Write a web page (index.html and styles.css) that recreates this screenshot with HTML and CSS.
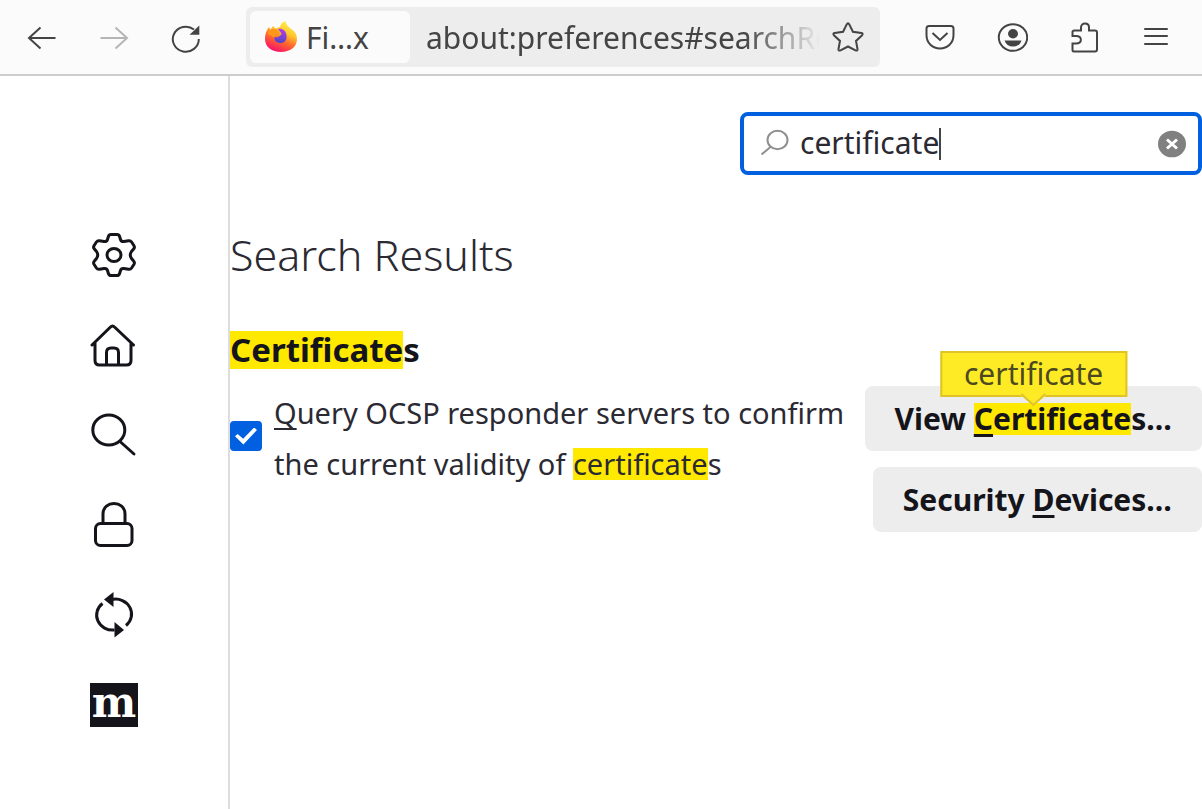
FILE: index.html
```html
<!DOCTYPE html>
<html lang="en">
<head>
<meta charset="utf-8">
<title>Settings</title>
<link rel="stylesheet" href="styles.css">
</head>
<body>
<header class="toolbar">
  <div class="toolbar-group">
    <button class="tool" type="button" aria-label="Back">
      <svg width="32" height="32" viewBox="0 0 32 32"><path d="M29.500 17H3M14.500 6.500L3 17l11.500 10.500"/></svg>
    </button>
    <button class="tool tool-disabled" type="button" aria-label="Forward" disabled>
      <svg width="32" height="32" viewBox="0 0 32 32"><path d="M2.500 17H29M17.500 6.500L29 17 17.500 27.500"/></svg>
    </button>
    <button class="tool" type="button" aria-label="Reload">
      <svg width="32" height="32" viewBox="0 0 32 32"><path d="M24 8.500A13 12.500 0 1 0 28.800 18"/><path class="solid" d="M29.300 4.500v9.300H19.500z"/></svg>
    </button>
  </div>
  <div class="urlbar">
    <button class="identity" type="button">
      <svg width="34" height="34" viewBox="0 0 34 34" aria-hidden="true">
        <defs>
          <linearGradient id="flame" x1="0.800" y1="0.050" x2="0.350" y2="1">
            <stop offset="0" stop-color="#fff44f"/><stop offset="0.350" stop-color="#ffc52e"/>
            <stop offset="0.620" stop-color="#ff6a2a"/><stop offset="1" stop-color="#f8106c"/>
          </linearGradient>
          <linearGradient id="globe" x1="0.600" y1="0" x2="0.400" y2="1">
            <stop offset="0" stop-color="#b83ce0"/><stop offset="1" stop-color="#4b46c8"/>
          </linearGradient>
        </defs>
        <path fill="url(#flame)" d="M1 19C1 14 2.500 10 5 7l1.500 2.500L9 6l2.500 2.500L16 7c.5-3 2.500-5 5.500-6 .5 4 3 6 6.500 8.500 3.500 2.500 5 5.500 5 9.500 0 8-7 13-16 13S1 27 1 19z"/>
        <path fill="url(#globe)" d="M14 9c4-1 8 1 8.500 6.500.5 5-2 7.500-6 7.500s-6.500-2.500-6-6c1.500.8 3.500.5 5-1 1-1 2-1 2-2-.5-2-2-2.500-3.500-5z"/>
        <path fill="#ff961c" d="M3.500 14c2-4.500 6-6 9.500-4.500l3 3.500c-2 1.500-4.500 1.500-6 4.500-2-1.500-4-2.500-6.500-3.500z"/>
      </svg>
      <span>Fi…x</span>
    </button>
    <div class="address">about:preferences#searchRes</div>
    <button class="star" type="button" aria-label="Bookmark this page">
      <svg width="34" height="34" viewBox="0 0 34 34"><path d="M16.700 4.400q1.300-2.400 2.600 0l3.600 7.400 8.500 1.200q2.100.5.700 2.200l-6.100 5.700 1.500 8.100q.2 2.200-2 1.400L18 26.500l-7.500 3.900q-2.200.8-2-1.400L10 20.900l-6.100-5.700q-1.400-1.700.7-2.200l8.500-1.200z"/></svg>
    </button>
  </div>
  <div class="toolbar-group">
    <button class="tool" type="button" aria-label="Save to Pocket">
      <svg width="32" height="32" viewBox="0 0 32 32"><path d="M5 5h22q2.500 0 2.500 2.500V14c0 8-6 13.500-13.500 13.500S2.500 22 2.500 14V7.500Q2.500 5 5 5z"/><path d="M8.500 12l7.500 7 7.500-7"/></svg>
    </button>
    <button class="tool" type="button" aria-label="Account">
      <svg width="32" height="32" viewBox="0 0 32 32"><ellipse cx="17" cy="16.500" rx="14.200" ry="13.300"/><ellipse class="solid" cx="17" cy="12.800" rx="5" ry="4.700"/><path class="solid" d="M8.500 19.500h17q-2 6-8.500 6t-8.500-6z"/></svg>
    </button>
    <button class="tool" type="button" aria-label="Extensions">
      <svg width="32" height="32" viewBox="0 0 32 32"><path d="M6.500 9.500H13V6.500c0-5.300 8-5.300 8 0v3h6q2 0 2 2v17q0 2-2 2h-21q-1.500 0-1.500-1.500v-6.500h3.500c6.500 0 6.500-7.500 0-7.500H4.500V11q0-1.500 2-1.500z"/></svg>
    </button>
    <button class="tool" type="button" aria-label="Open application menu">
      <svg width="32" height="32" viewBox="0 0 32 32"><path stroke-linecap="round" d="M5 8h22M5 15h22M5 23h22"/></svg>
    </button>
  </div>
</header>
<div class="page">
  <nav class="sidebar" aria-label="Settings categories">
    <a href="#general" aria-label="General">
      <svg width="48" height="48" viewBox="-24 -24 48 48">
        <defs><path id="gear-half" d="M0-20.500H3Q5-20.500 5.600-18.500L6.500-15.500Q7.300-13 10-13.500L14.500-14.300Q16.500-14.600 17.600-13L20-9.300Q21-7.500 19.600-6L17.500-3.500Q15 0 17.500 3.500L19.600 6Q21 7.500 20 9.300L17.600 13Q16.500 14.600 14.500 14.300L10 13.500Q7.300 13 6.500 15.500L5.600 18.500Q5 20.500 3 20.500H0"/></defs>
        <use href="#gear-half"/><use href="#gear-half" transform="scale(-1 1)"/><ellipse rx="7" ry="6.500"/>
      </svg>
    </a>
    <a href="#home" aria-label="Home">
      <svg width="48" height="48" viewBox="0 0 48 48"><path stroke-linecap="round" d="M2 24L20.500 6Q22.500 4 24.500 6L43.500 24M5 22v17.500Q5 44 9.500 44h27q4.500 0 4.500-4.500V22M16.500 44V31.500q0-4.500 4.500-4.500h3q4.500 0 4.500 4.500v12.500"/></svg>
    </a>
    <a href="#search" aria-label="Search">
      <svg width="48" height="48" viewBox="0 0 48 48"><ellipse cx="18.800" cy="19" rx="16" ry="15"/><path stroke-linecap="round" d="M30 30.500l14 12.500"/></svg>
    </a>
    <a href="#privacy" aria-label="Privacy &amp; Security">
      <svg width="48" height="48" viewBox="0 0 48 48"><rect x="5.500" y="22.500" width="36.500" height="22" rx="5"/><path d="M13 22V13c0-14 22-14 22 0v9"/></svg>
    </a>
    <a href="#sync" aria-label="Sync">
      <svg width="48" height="48" viewBox="0 0 48 48"><path d="M12.500 12.500A16 15 0 0 0 24.500 39M22 8.500A16 15 0 0 1 36 34.500"/><path class="solid" d="M23.500 1v15L14 8.500zM24.500 31v15.500L34 39z"/></svg>
    </a>
    <a href="#mozilla" aria-label="More from Mozilla"><span class="mozilla">m</span></a>
  </nav>
  <main class="content">
    <div class="search">
      <svg width="30" height="30" viewBox="0 0 30 30" aria-hidden="true"><ellipse cx="17.500" cy="11" rx="10" ry="9.300"/><path d="M10.500 18l-9 7.500"/></svg>
      <input class="search-input" type="text" value="certificate" aria-label="Find in Settings">
      <span class="caret"></span>
      <button class="clear" type="button" aria-label="Clear">
        <svg width="28" height="28" viewBox="0 0 28 28"><ellipse cx="14" cy="14" rx="14" ry="13.300"/><path d="M9 9.500l10 9M19 9.500l-10 9"/></svg>
      </button>
    </div>
    <h1 class="title">Search Results</h1>
    <h2 class="subtitle"><mark>Certificate</mark>s</h2>
    <div class="row">
      <div class="option">
        <input class="check" type="checkbox" id="ocsp" checked>
        <label for="ocsp"><u>Q</u>uery OCSP responder servers to confirm the current validity of <mark>certificate</mark>s</label>
      </div>
      <div class="actions">
        <button class="action" type="button">View <mark class="hit"><u>C</u>ertificate<span class="tip">certificate<svg width="26" height="12" viewBox="0 0 26 12" aria-hidden="true"><path class="tip-fill" d="M0-2h26V0L13 11 0 0z"/><path class="tip-edge" d="M1-1l12 11L25-1"/></svg></span></mark>s…</button>
        <button class="action" type="button">Security <u>D</u>evices…</button>
      </div>
    </div>
  </main>
</div>
</body>
</html>
```
FILE: styles.css
```css
* { box-sizing: border-box; }
body {
  margin: 0;
  min-height: 100vh;
  display: flex;
  flex-direction: column;
  background: #fff;
  color: #15141a;
  font-family: "Noto Sans", "Open Sans", sans-serif;
  font-size: 30px;
}
button { border: 0; background: none; padding: 0; font: inherit; color: inherit; }
svg { display: block; fill: none; stroke: currentColor; stroke-width: 2; flex: none; }
svg .solid { fill: currentColor; stroke: none; }
mark { background: #ffe900; color: inherit; }
u { text-decoration-thickness: 2px; text-underline-offset: 4px; text-decoration-skip-ink: none; }

.toolbar {
  display: flex;
  align-items: center;
  gap: 24px;
  height: 76px;
  padding: 0 10px 0 6px;
  background: #fbfbfb;
  border-bottom: 2px solid #ccc;
  color: #444;
}
.toolbar-group { display: flex; }
.tool { width: 72px; height: 60px; display: flex; align-items: center; justify-content: center; }
.tool-disabled { color: #b5b5b5; }
.urlbar {
  flex: 1;
  min-width: 0;
  display: flex;
  align-items: center;
  height: 60px;
  padding: 4px;
  background: #ededed;
  border-radius: 6px;
}
.identity {
  display: flex;
  align-items: center;
  gap: 8px;
  width: 160px;
  height: 52px;
  padding-left: 14px;
  background: #fbfbfb;
  border-radius: 6px;
}
.identity svg { stroke: none; }
.address {
  flex: 1;
  min-width: 0;
  margin: 0 10px 0 16px;
  overflow: hidden;
  white-space: nowrap;
  -webkit-mask-image: linear-gradient(to left, transparent, #000 76px);
  mask-image: linear-gradient(to left, transparent, #000 76px);
}
.star { margin-right: 12px; }

.page { flex: 1; display: flex; }
.sidebar {
  width: 230px;
  padding-top: 134px;
  border-right: 2px solid #ddd;
  display: flex;
  flex-direction: column;
}
.sidebar a {
  height: 90px;
  display: flex;
  align-items: center;
  justify-content: center;
  color: #15141a;
  text-decoration: none;
}
.sidebar svg { stroke-width: 3; }
.mozilla {
  width: 48px;
  height: 44px;
  background: #15141a;
  color: #fff;
  font: bold 42px/40px "DejaVu Serif", serif;
  text-align: center;
}

.content { flex: 1; min-width: 0; display: flex; flex-direction: column; padding-top: 36px; }
.search {
  align-self: flex-end;
  width: 462px;
  height: 63px;
  display: flex;
  align-items: center;
  padding: 0 12px 0 16px;
  border: 4px solid #0060df;
  border-radius: 8px;
}
.search > svg { color: #8f8f8f; }
.search-input {
  field-sizing: content;
  height: 44px;
  margin-left: 10px;
  padding: 0 0 2px;
  border: 0;
  outline: 0;
  font: inherit;
  color: #2b2a33;
}
.caret { width: 2px; height: 32px; background: #444; }
.clear { margin-left: auto; }
.clear ellipse { fill: #808080; stroke: none; }
.clear path { stroke: #fff; stroke-width: 3; }

.title { margin: 50px 0 0; font: 300 43px/60px "Noto Sans", "Open Sans", sans-serif; color: #2b2a33; }
.subtitle { margin: 46px 0 0; font-size: 33px; font-weight: 700; line-height: 38px; }
.subtitle mark { display: inline-block; }
.row { display: flex; justify-content: space-between; align-items: flex-start; margin-top: 17px; }
.option { flex: 1; display: flex; align-items: flex-start; gap: 12px; color: #2b2a33; font-size: 29px; line-height: 51px; }
.option label { padding-top: 1px; }
.option mark { display: inline-block; line-height: 32px; }
.check {
  appearance: none;
  flex: none;
  width: 32px;
  height: 30px;
  margin: 35px 0 0;
  border-radius: 4px;
  background: #0060df;
  display: grid;
  place-items: center;
}
.check::after {
  content: "";
  width: 22px;
  height: 17px;
  background: #fff;
  clip-path: polygon(0 52%, 12% 38%, 37% 66%, 87% 0, 100% 14%, 38% 100%);
}
.actions { display: flex; flex-direction: column; align-items: flex-end; gap: 16px; margin-left: 16px; }
.action {
  height: 65px;
  padding: 0 30px;
  background: #ededed;
  border-radius: 8px;
  font-weight: 700;
  white-space: nowrap;
}
.action u { text-decoration-thickness: 3px; }
.hit { position: relative; display: inline-block; line-height: 32px; }
.tip {
  position: absolute;
  left: 38%;
  bottom: 38px;
  transform: translateX(-50%);
  padding: 4px 22px;
  border: 2px solid #dfc32b;
  background: #ffeb25;
  color: #4c4920;
  font-weight: 400;
  line-height: 34px;
}
.tip svg { position: absolute; left: calc(50% - 13px); top: 100%; overflow: visible; }
.tip-fill { fill: #ffeb25; stroke: none; }
.tip-edge { stroke: #dfc32b; }
```
